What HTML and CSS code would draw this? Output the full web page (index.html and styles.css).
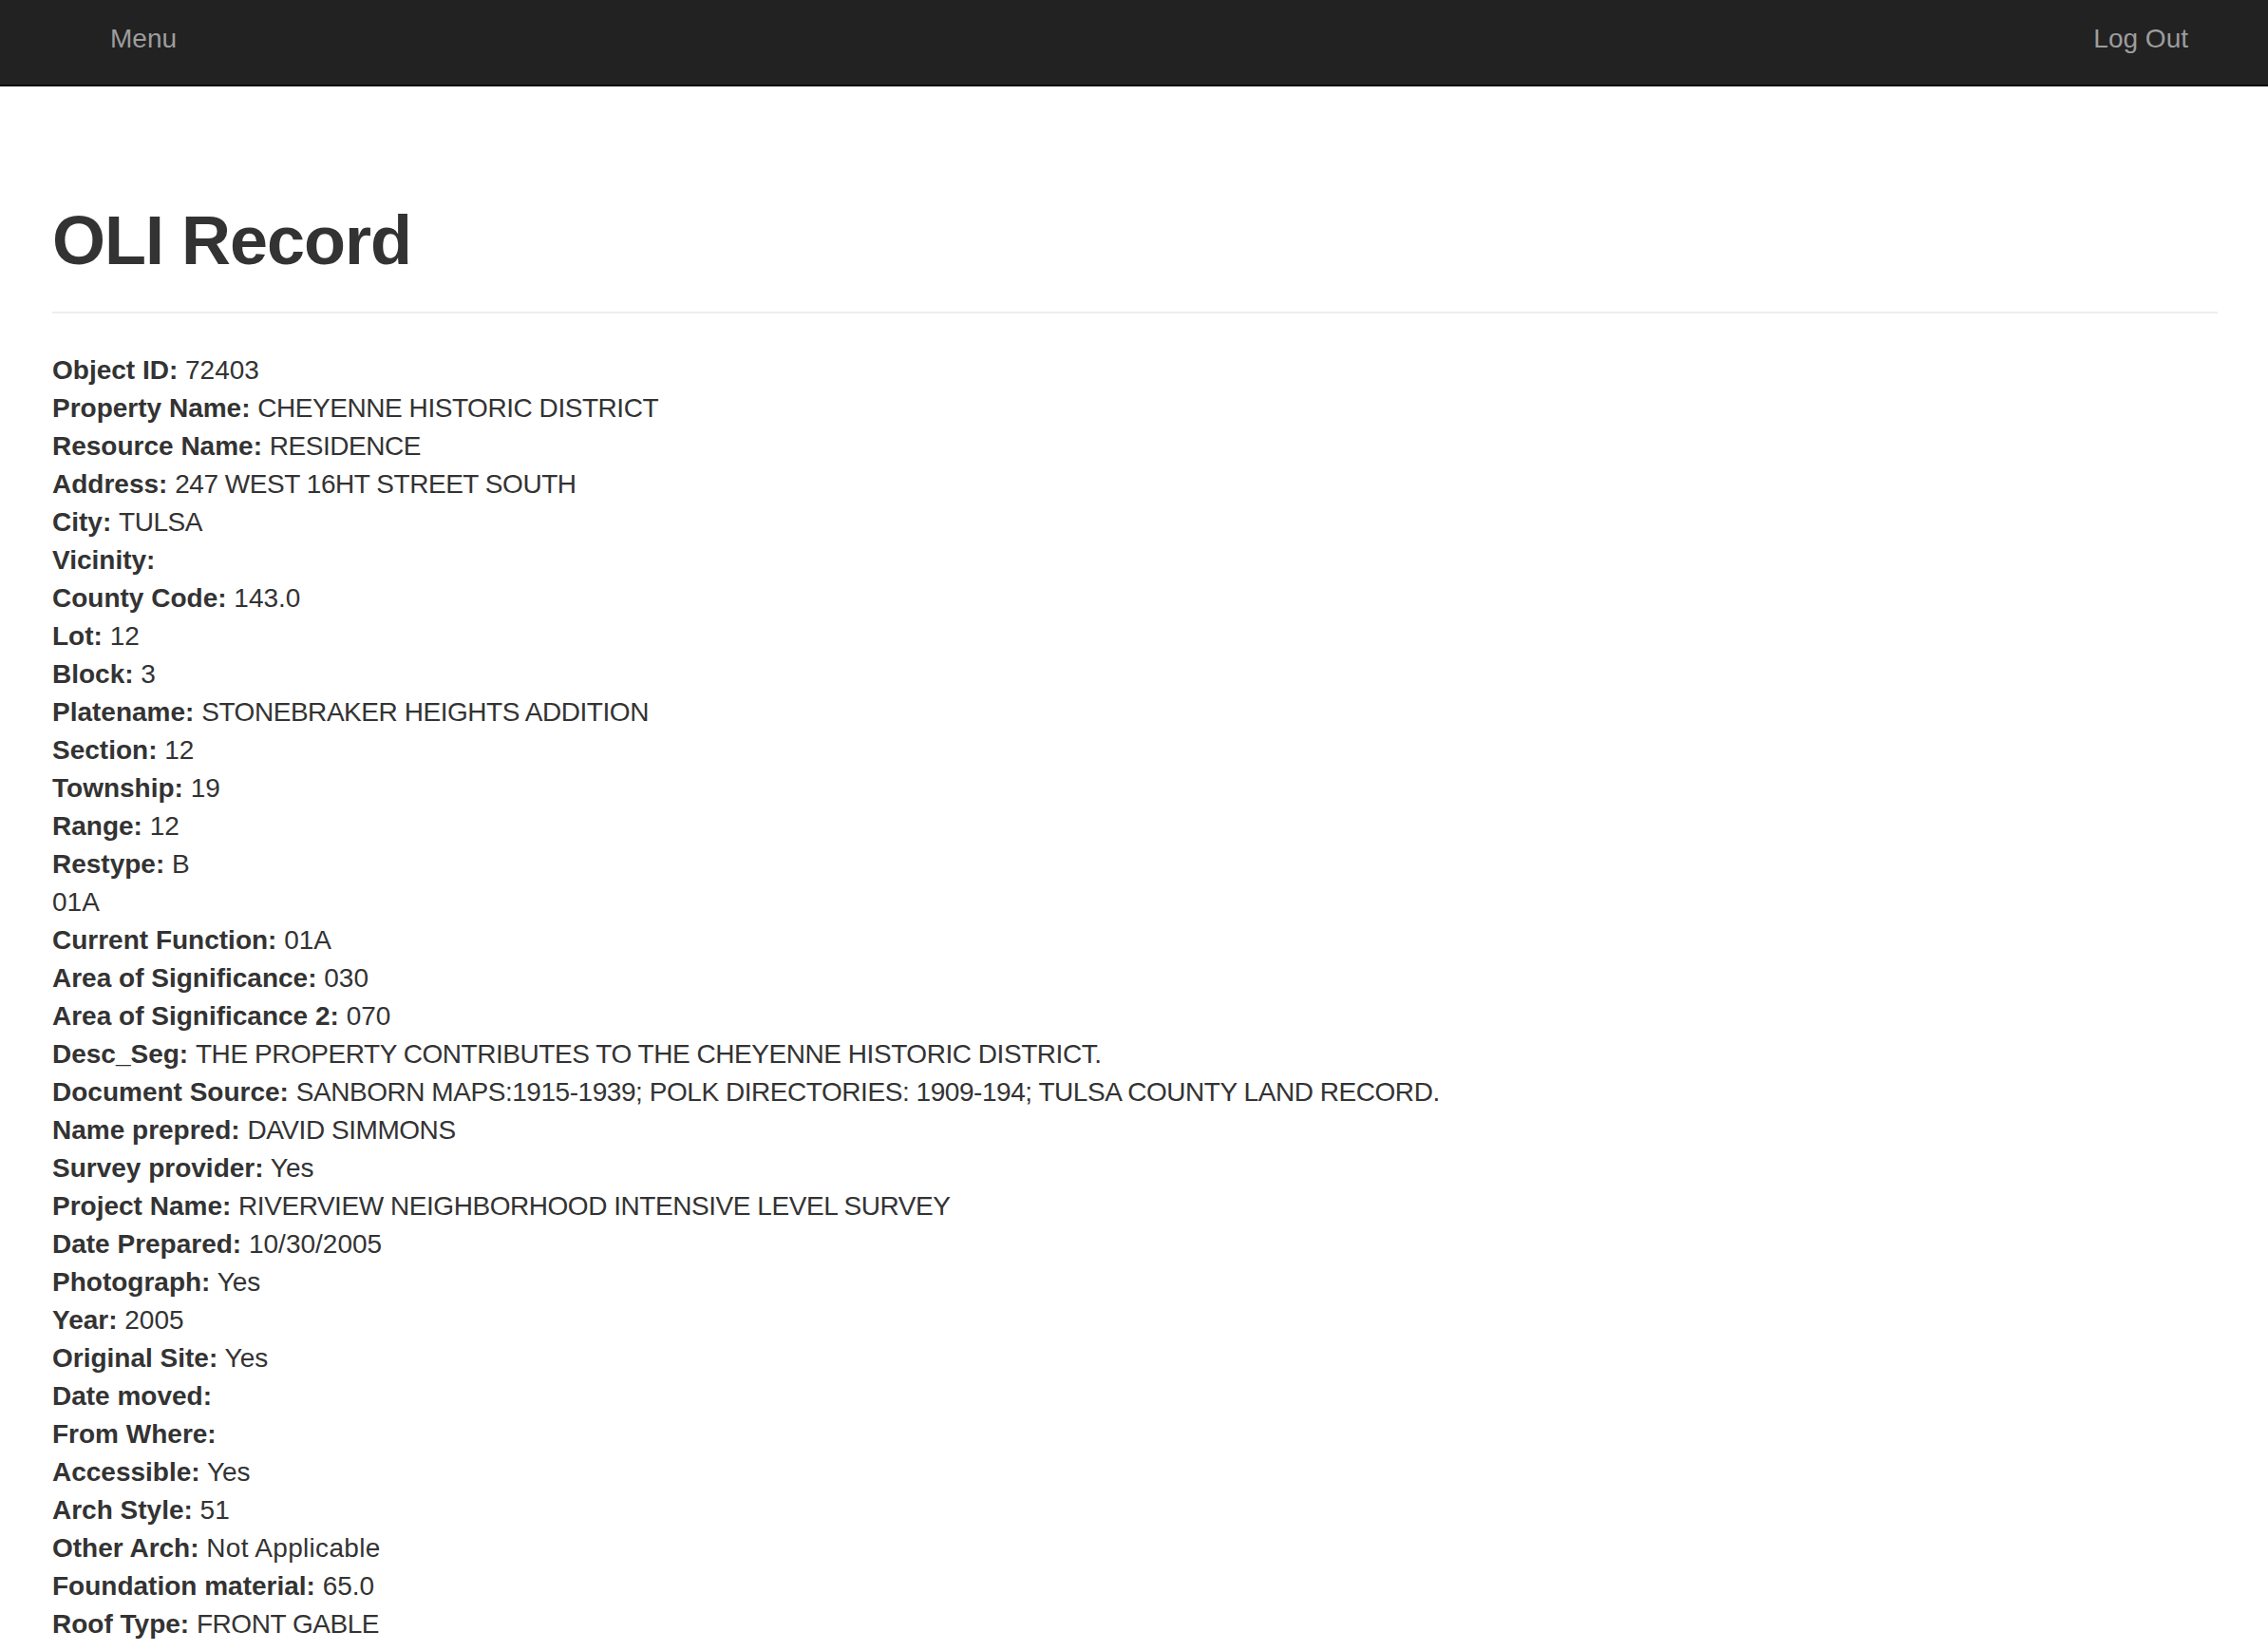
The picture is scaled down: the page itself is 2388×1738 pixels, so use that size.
FILE: index.html
```html
<!DOCTYPE html>
<html lang="en">
<head>
<meta charset="utf-8">
<title>OLI Record</title>
<link rel="stylesheet" href="styles.css">
</head>
<body>
<nav class="navbar">
  <a class="nav-link" href="#">Menu</a>
  <a class="nav-link" href="#">Log Out</a>
</nav>
<main class="container">
  <h1 class="page-title">OLI Record</h1>
  <hr class="divider">
  <div class="record">
    <div class="row"><b>Object ID:</b> 72403</div>
    <div class="row"><b>Property Name:</b> <span class="caps">CHEYENNE HISTORIC DISTRICT</span></div>
    <div class="row"><b>Resource Name:</b> <span class="caps">RESIDENCE</span></div>
    <div class="row"><b>Address:</b> <span class="caps">247 WEST 16HT STREET SOUTH</span></div>
    <div class="row"><b>City:</b> <span class="caps">TULSA</span></div>
    <div class="row"><b>Vicinity:</b> </div>
    <div class="row"><b>County Code:</b> 143.0</div>
    <div class="row"><b>Lot:</b> 12</div>
    <div class="row"><b>Block:</b> 3</div>
    <div class="row"><b>Platename:</b> <span class="caps">STONEBRAKER HEIGHTS ADDITION</span></div>
    <div class="row"><b>Section:</b> 12</div>
    <div class="row"><b>Township:</b> 19</div>
    <div class="row"><b>Range:</b> 12</div>
    <div class="row"><b>Restype:</b> B</div>
    <div class="row">01A</div>
    <div class="row"><b>Current Function:</b> 01A</div>
    <div class="row"><b>Area of Significance:</b> 030</div>
    <div class="row"><b>Area of Significance 2:</b> 070</div>
    <div class="row"><b>Desc_Seg:</b> <span class="caps">THE PROPERTY CONTRIBUTES TO THE CHEYENNE HISTORIC DISTRICT.</span></div>
    <div class="row"><b>Document Source:</b> <span class="caps">SANBORN MAPS:1915-1939; POLK DIRECTORIES: 1909-194; TULSA COUNTY LAND RECORD.</span></div>
    <div class="row"><b>Name prepred:</b> <span class="caps">DAVID SIMMONS</span></div>
    <div class="row"><b>Survey provider:</b> Yes</div>
    <div class="row"><b>Project Name:</b> <span class="caps">RIVERVIEW NEIGHBORHOOD INTENSIVE LEVEL SURVEY</span></div>
    <div class="row"><b>Date Prepared:</b> 10/30/2005</div>
    <div class="row"><b>Photograph:</b> Yes</div>
    <div class="row"><b>Year:</b> 2005</div>
    <div class="row"><b>Original Site:</b> Yes</div>
    <div class="row"><b>Date moved:</b> </div>
    <div class="row"><b>From Where:</b> </div>
    <div class="row"><b>Accessible:</b> Yes</div>
    <div class="row"><b>Arch Style:</b> 51</div>
    <div class="row"><b>Other Arch:</b> <span class="wide">Not Applicable</span></div>
    <div class="row"><b>Foundation material:</b> 65.0</div>
    <div class="row"><b>Roof Type:</b> <span class="caps">FRONT GABLE</span></div>
  </div>
</main>
</body>
</html>
```
FILE: styles.css
```css
html, body {
  margin: 0;
  padding: 0;
  background: #ffffff;
}
body {
  font-family: "Liberation Sans", Arial, sans-serif;
  color: #333333;
  font-size: 28px;
  line-height: 40px;
}
.navbar {
  height: 89px;
  background: #222222;
  border-bottom: 2px solid #080808;
  display: flex;
  justify-content: space-between;
  align-items: center;
  padding: 0 84px 0 116px;
}
.nav-link {
  color: #9d9d9d;
  text-decoration: none;
  font-size: 28px;
  line-height: 40px;
  padding-bottom: 8px;
}
.container {
  padding: 122px 53px 40px 55px;
}
.page-title {
  margin: 0;
  font-size: 72px;
  line-height: 80px;
  font-weight: 700;
  letter-spacing: -1px;
  color: #333333;
}
.divider {
  margin: 35px 0 0;
  border: 0;
  border-top: 2px solid #eeeeee;
  height: 0;
}
.record {
  margin-top: 40px;
}
.row b {
  font-weight: 700;
}
.caps {
  letter-spacing: -0.45px;
}
.wide {
  letter-spacing: 0.3px;
}
```
